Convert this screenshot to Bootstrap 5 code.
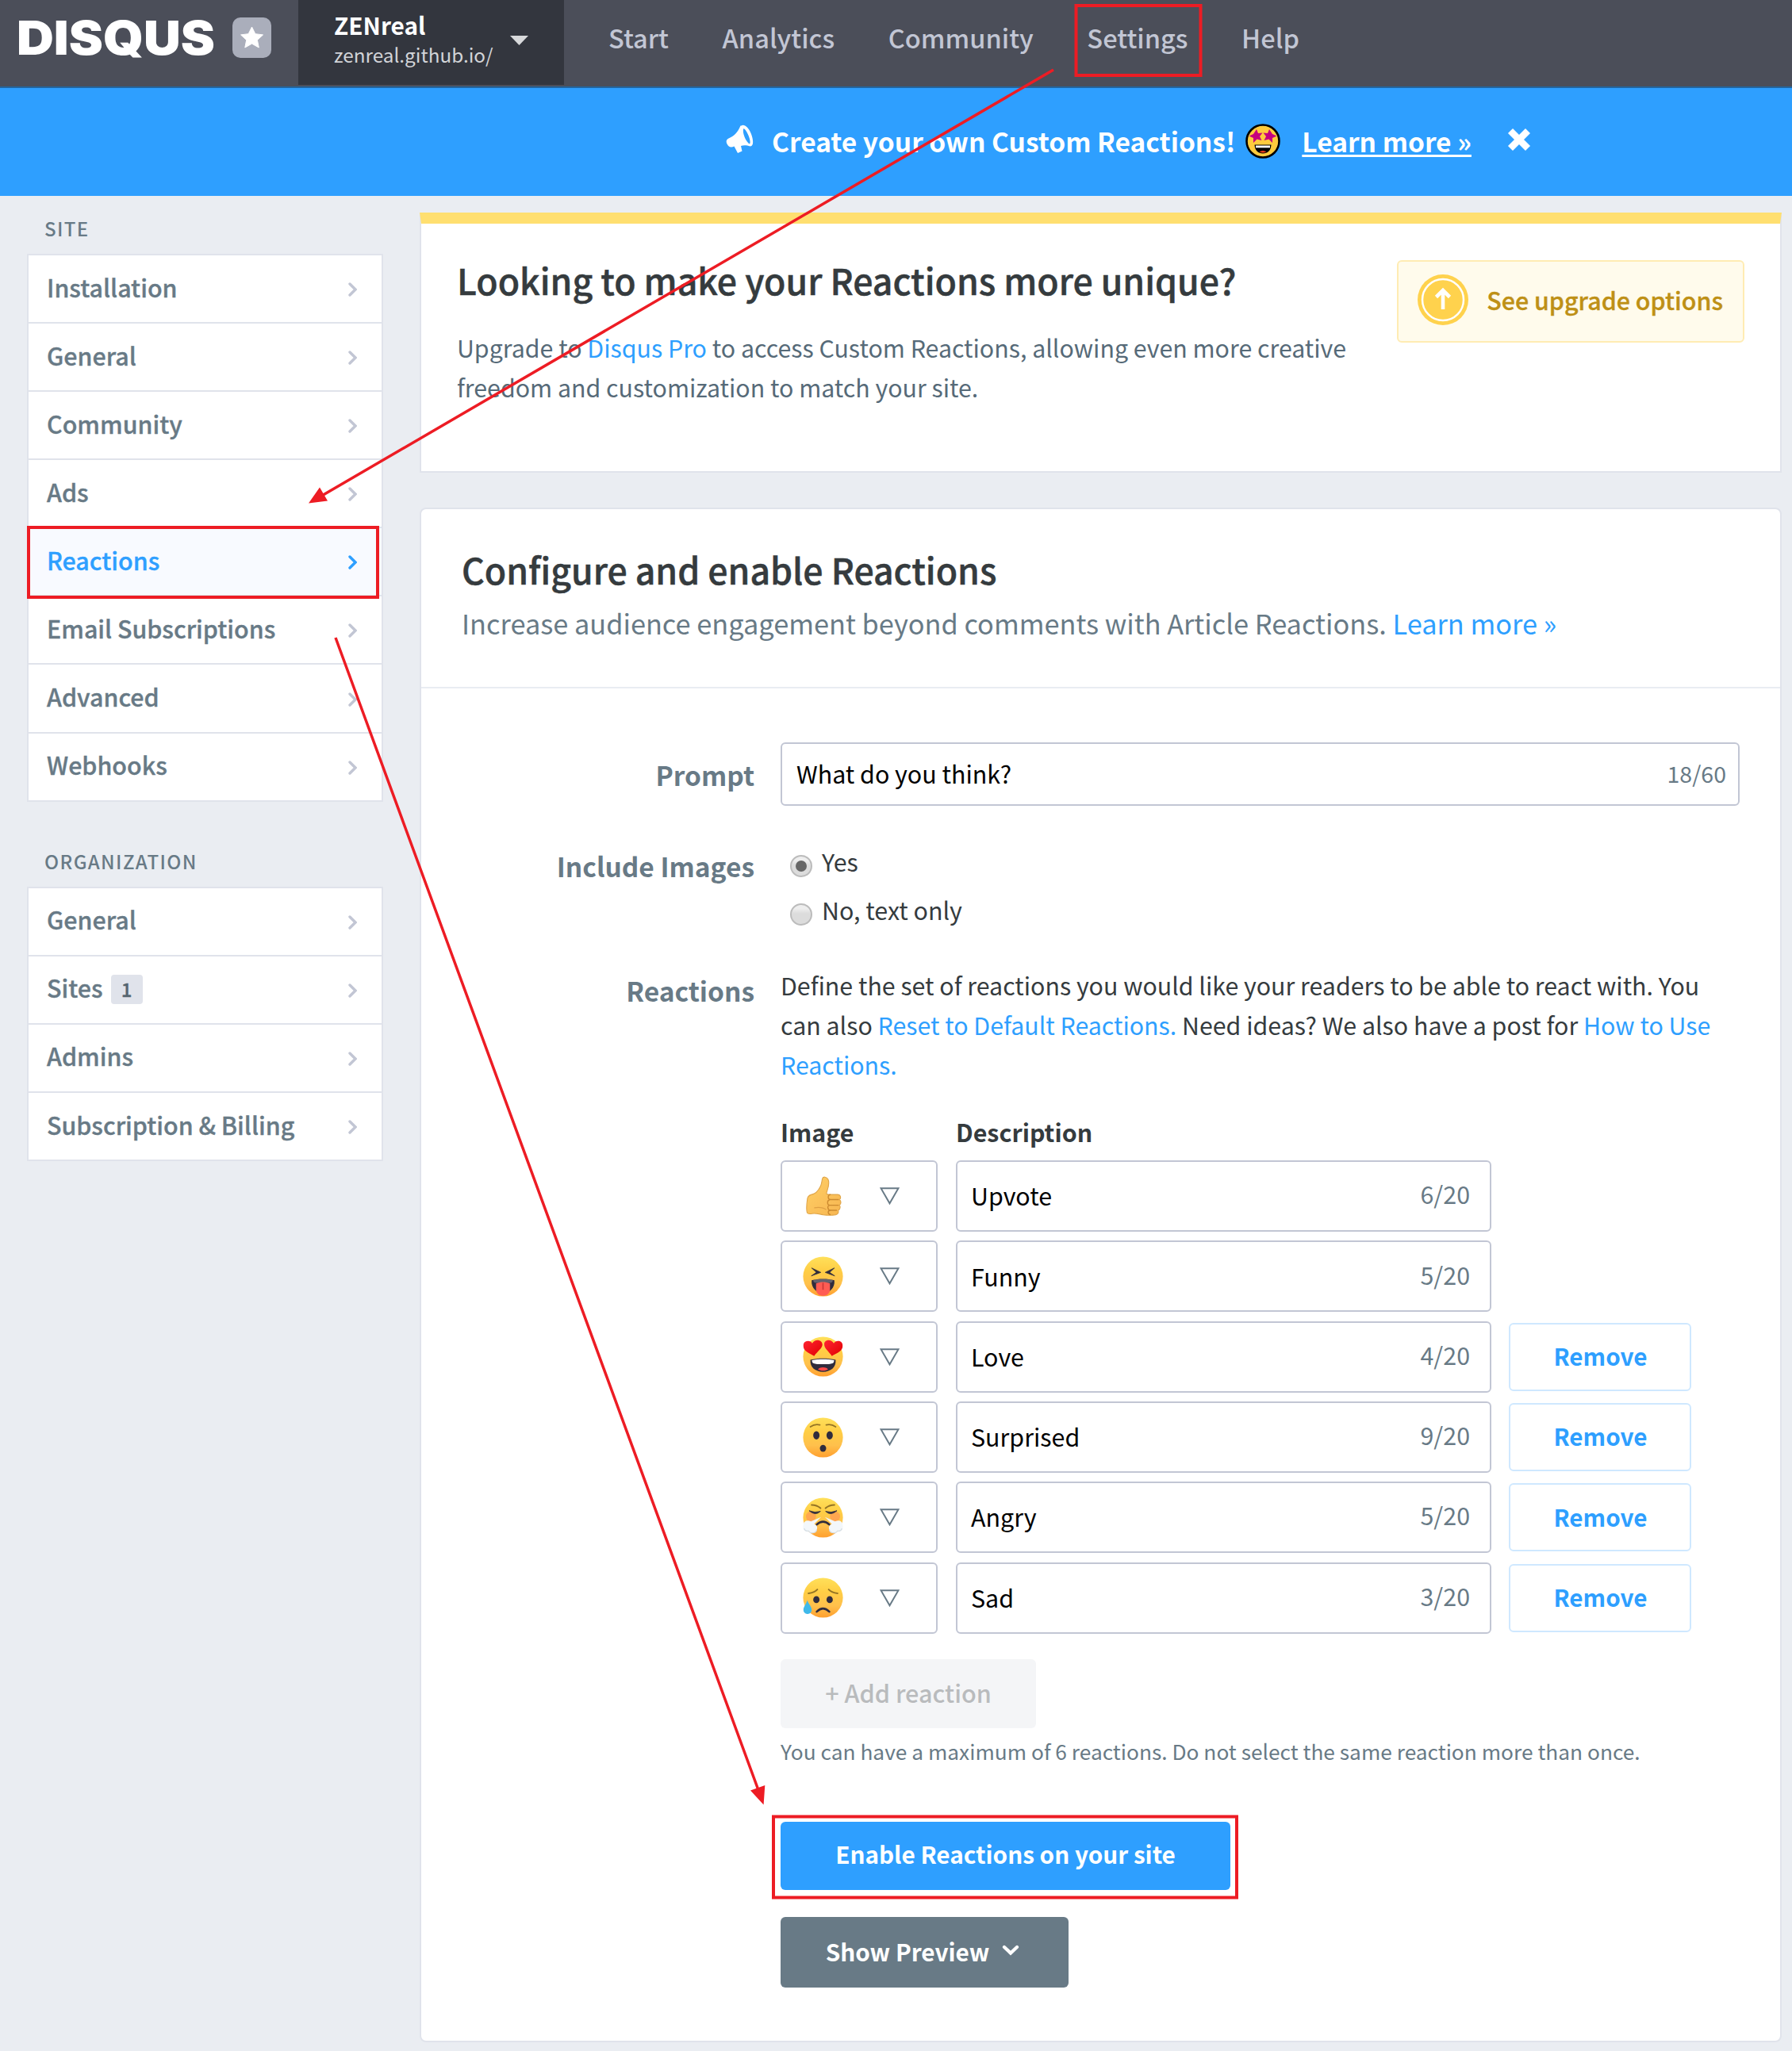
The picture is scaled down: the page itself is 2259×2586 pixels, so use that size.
<!DOCTYPE html>
<html lang="en">
<head>
<meta charset="utf-8">
<title>Disqus – Reactions settings</title>
<meta name="viewport" content="width=device-width, initial-scale=1">
<link href="https://cdn.jsdelivr.net/npm/bootstrap@5.3.0/dist/css/bootstrap.min.css" rel="stylesheet">
<style>
:root{--line:#e0e3eb;--slate:#687a86;--blue:#2e9fff;--field:#c2c6d4}
body{font-family:"Noto Sans CJK SC","Source Sans Pro",sans-serif;background:#eaedf2;color:#353b3e;font-size:30.4px;overflow-x:hidden}
a{color:var(--blue);text-decoration:none}
.topnav{height:109px;background:#4b4e59}
.brand-mark{padding:0 34px 15px 20px;width:376px}
.site-pick{width:335px;height:107px;background:#33363e;padding:13px 45px 0 45px}
.site-name{font-size:29.8px;font-weight:700;line-height:36px;color:#fff}
.site-url{font-size:24.3px;line-height:36px;margin-top:2px;color:#d2d4d8}
.menu-links{gap:67.6px;padding:0 0 14px 56px;font-size:32.6px;font-weight:500}
.menu-links a{color:#c2c6d4}
.promo{height:137.5px;background:var(--blue);border-top:2px solid #24659e;color:#fff;font-size:33.5px;font-weight:700;padding:0 0 2px 915px}
.promo a{color:#fff;text-decoration:underline;text-decoration-thickness:3px;text-underline-offset:3px}
.side{width:529px;padding:21.5px 46px 0 34px}
.side-title{font-size:24px;font-weight:500;letter-spacing:1.4px;line-height:40px;color:var(--slate);padding-left:22px;margin-bottom:12px}
.side .list-group{--bs-list-group-border-color:var(--line);border-radius:0}
.side .list-group-item{height:86.100px;border-width:0 2px 2px;padding:0 31px 0 23px;font-size:30.4px;font-weight:500;color:var(--slate);border-color:var(--line);border-radius:0;-webkit-text-stroke:.35px}
.side .list-group-item+.list-group-item{border-top-width:0}
.side .list-group-item:first-child{height:88px;border-top-width:2px}
.side .list-group-item.on{background:#f8faff;color:var(--blue)}
.side .lbl{padding-bottom:3px}
.side svg{color:var(--field);margin-top:2px}
.side .on svg{color:var(--blue)}
.num{background:var(--line);color:#556570;font-size:24px;font-weight:500;width:40px;height:37px;line-height:35px;border-radius:4px;margin-left:10px;text-align:center}
.main-col{width:1717px;padding-top:21px}
.panel{background:#fff;border:2px solid var(--line)}
.upsell{height:328px;border-top:14px solid #ffdf70;padding:41px 45px 0 45px}
.h-big{font-size:44.6px;font-weight:500;line-height:60px;margin:0;-webkit-text-stroke:.5px}
.upsell p{font-size:30.33px;line-height:50px;margin:30px 0 0;max-width:1160px;color:#566a78}
.up-btn{width:438px;height:104px;margin-top:5px;background:#fffbec;border:2px solid #ffecb3;border-radius:6px;color:#be9016;font-weight:500;font-size:30.4px;padding:0 25px 0 24px;-webkit-text-stroke:.35px}
.config{height:1935px;margin-top:44.5px;border-radius:8px}
.config-head{height:226px;padding:46px 50px 0 51px;border-bottom:2px solid #e9edf2}
.config-head p{font-size:34.33px;line-height:50px;margin:12px 0 0;color:var(--slate)}
.config-body{padding:68px 51px 0 0}
.f-label{width:420px;text-align:right;font-size:33.5px;font-weight:700;line-height:50px;color:var(--slate);flex:none}
.f-field{width:1209px;flex:none}
.f-row{gap:33px}
.box{border:2px solid var(--field);border-radius:6px;background:#fff;color:#000}
.cnt{color:var(--slate)}
.opt{line-height:40px;font-size:30.4px}
.dot{width:28px;height:28px;border-radius:50%;background:linear-gradient(#eee 20%,#dcdcdc 45%);border:2px solid #bcbcbc;margin:12px 12px 0 12px}
.dot.sel::after{content:"";display:block;width:14px;height:14px;border-radius:50%;background:#666;margin:5px}
.help-p{font-size:30.33px;line-height:50.2px;margin:0}
.col-h{font-weight:700;font-size:30.4px;line-height:40px;margin-top:39.5px}
.r-rows{gap:11.3px;margin-top:16.5px}
.r-row{height:90px}
.r-img{width:198px;padding-left:26px;margin-right:23px}
.r-img .tri{margin-left:45.5px}
.r-desc{width:675px;padding:0 25px 0 17px;margin-right:22px}
.r-desc .cnt{padding-bottom:4px;font-size:30.4px}
.btn{border-radius:6px;font-weight:700;font-size:29.7px;padding:0}
.b-rm{width:230px;height:86px;border:2px solid #cfe8ff;color:var(--blue);padding:0 0 1px 1px}
.b-add{width:322px;height:87px;background:#f4f5f7;color:#b9bbbd;font-weight:500;font-size:30.6px;margin-top:32.5px;padding-bottom:1px}
.b-on{width:567px;height:86px;background:var(--blue);color:#fff;margin-top:69px;padding-bottom:3px}
.b-prev{width:363px;height:89px;background:var(--slate);color:#fff;margin-top:34px}
.note{font-size:26.3px;line-height:40px;color:var(--slate);margin-top:9px}
.marks{left:0;top:0;pointer-events:none}
</style>
</head>
<body class="position-relative">
<svg width="0" height="0" class="position-absolute" aria-hidden="true">
 <defs>
  <linearGradient id="face" x1="0" y1="0" x2="0" y2="1"><stop offset="0" stop-color="#ffe05a"/><stop offset=".35" stop-color="#ffce45"/><stop offset=".7" stop-color="#ffc04c"/><stop offset="1" stop-color="#ff9f2e"/></linearGradient>
  <linearGradient id="hand" x1="0" y1="0" x2="1" y2="1"><stop offset="0" stop-color="#ffcf66"/><stop offset="1" stop-color="#f7b651"/></linearGradient>
  <linearGradient id="heart" x1="0" y1="0" x2="1" y2="1"><stop offset="0" stop-color="#ff2433"/><stop offset="1" stop-color="#e00000"/></linearGradient>
  <symbol id="chev" viewBox="0 0 11 18"><path d="M2 2l7 7-7 7" fill="none" stroke="currentColor" stroke-width="3.4" stroke-linecap="round" stroke-linejoin="miter"/></symbol>
  <symbol id="tri" viewBox="0 0 25 22"><path d="M1.5 1.2h22L12.5 20.3z" fill="none" stroke="#687a86" stroke-width="2"/></symbol>
  <symbol id="e-up" viewBox="0 0 64 64">
   <path d="M7 38c0-6 3-8 7-9 7-1 11-7 14-13 2-4 2-8 3-12 1-4 7-3 9 1 3 6 0 14-2 20-1 3 0 4 3 4h14c5 0 6 6 3 8 3 2 3 7 0 9 2 2 1 7-2 8 1 3 0 6-4 7-6 1-13 1-20 0-6-1-9-2-14-2-4 0-9 2-11-1-1-3-1-13 0-20z" fill="url(#hand)" stroke="#e0a548" stroke-width="1.4"/>
   <path d="M57 37H44c-5 0-5-8 0-8M57 46H43c-5 0-5-8 0-9M54 54H44c-5 0-6-8-1-8M44 61c-5-1-5-7 0-7" fill="none" stroke="#cc8a30" stroke-width="1.7"/>
   <path d="M18 50c6-1 14-1 19 3" fill="none" stroke="#dfa044" stroke-width="1.4"/>
  </symbol>
  <symbol id="e-funny" viewBox="0 0 64 64"><circle cx="32" cy="32" r="31.500" fill="url(#face)"/>
   <path d="M14 18.500l14.500 7-15 5.500 8-5.500zM50 18.500l-14.500 7 15 5.500-8-5.500z" fill="#302c3d" stroke="#302c3d" stroke-linejoin="round"/>
   <path d="M14 38c11-3 25-3 36 0 1 13-8 20-18 20s-19-7-18-20z" fill="#302c3d"/><path d="M16.500 38c9-2.500 22-2.500 31 0-.5 4-2 4.500-15.500 4.500S17 42 16.500 38z" fill="#fff" opacity=".25"/>
   <path d="M21 43c8-3 14-3 22 0v9c0 14-22 14-22 0z" fill="#ff5c53"/><path d="M32 42v11" stroke="#c93636" stroke-width="2"/></symbol>
  <symbol id="e-love" viewBox="0 0 64 64"><circle cx="32" cy="32" r="31.500" fill="url(#face)"/>
   <path d="M18 31C10 26 0 23 1 14c0-8 11-9 14-3C19 3 31 5 31 13c0 6-8 11-13 18z" fill="url(#heart)"/>
   <path d="M46 31c8-5 18-8 17-17 0-8-11-9-14-3C45 3 33 5 34 13c0 6 7 11 12 18z" fill="url(#heart)"/>
   <path d="M12 37c13-3 27-3 40 0 1 12-8 19-20 19S11 49 12 37z" fill="#302c3d"/><path d="M14.500 37.500c11-2 24-2 35 0 0 5-2 6.500-17.500 6.500s-17.500-1.500-17.500-6.500z" fill="#fff"/><path d="M24 52c4-4 12-4 16 0-4 3-12 3-16 0z" fill="#ff4a4a"/></symbol>
  <symbol id="e-wow" viewBox="0 0 64 64"><circle cx="32" cy="32" r="31.500" fill="url(#face)"/>
   <path d="M12 15q7-5 15-3M37 12q8-2 15 3" fill="none" stroke="#947425" stroke-width="2.200" stroke-linecap="round"/>
   <ellipse cx="21.500" cy="28.500" rx="5" ry="6.500" fill="#302c3d"/><ellipse cx="42.500" cy="28.500" rx="5" ry="6.500" fill="#302c3d"/><ellipse cx="32" cy="49" rx="5" ry="5.500" fill="#302c3d"/></symbol>
  <symbol id="e-angry" viewBox="0 0 64 64"><circle cx="32" cy="32" r="31.500" fill="url(#face)"/>
   <circle cx="13" cy="30" r="8" fill="#ff7d5c" opacity=".45"/><circle cx="51" cy="30" r="8" fill="#ff7d5c" opacity=".45"/>
   <path d="M14 12q8 0 14 5M50 12q-8 0-14 5" fill="none" stroke="#947425" stroke-width="2.600" stroke-linecap="round"/>
   <path d="M10 21q9 4 18 1-8 8-18-1zM54 21q-9 4-18 1 8 8 18-1z" fill="#302c3d" stroke="#302c3d" stroke-linejoin="round"/>
   <path d="M22 43q10-9 20 0" fill="none" stroke="#302c3d" stroke-width="3.200" stroke-linecap="round"/>
   <path d="M29 31L13 38q-10-4-12 5c-2 7 2 12 8 10 3 5 12 4 13-2 2-4 0-7-4-9zM35 31l16 7q10-4 12 5c2 7-2 12-8 10-3 5-12 4-13-2-2-4 0-7 4-9z" fill="#f3f7fa"/><path d="M2 49c2 6 5 4 7 4 3 5 12 4 13-2M62 49c-2 6-5 4-7 4-3 5-12 4-13-2" fill="none" stroke="#d6dee4" stroke-width="1.500"/></symbol>
  <symbol id="e-sad" viewBox="0 0 64 64"><circle cx="32" cy="32" r="31.500" fill="url(#face)"/>
   <path d="M9 25q9-1 14-6M55 25q-9-1-14-6" fill="none" stroke="#947425" stroke-width="2.600" stroke-linecap="round"/>
   <ellipse cx="21.500" cy="35" rx="5" ry="5.500" fill="#302c3d"/><ellipse cx="42.500" cy="35" rx="5" ry="5.500" fill="#302c3d"/>
   <path d="M22 54q10-10 20 0" fill="none" stroke="#302c3d" stroke-width="3.200" stroke-linecap="round"/>
   <path d="M7 36c3 7 7 10 7 15 0 9-13 9-13 0 0-5 4-8 6-15z" fill="#3fb9ea"/></symbol>
 </defs>
</svg>

<header class="topnav d-flex">
 <div class="brand-mark d-flex align-items-center justify-content-between">
  <svg width="254" height="72" viewBox="0 0 254 72" class="flex-shrink-0"><text x="1" y="58" textLength="250" lengthAdjust="spacingAndGlyphs" font-family="Inter, sans-serif" font-weight="900" font-size="58.500" fill="#fff">DISQUS</text></svg>
  <svg width="49" height="51" viewBox="0 0 49 51" class="flex-shrink-0"><rect width="49" height="51" rx="10" fill="#aaaebb"/><path d="M24.500 12l4.300 8.700 9.700 1.200-7.100 6.600 1.900 9.500-8.800-4.900-8.700 4.900 1.900-9.500-7.100-6.600 9.600-1.200z" fill="#fff" stroke="#fff" stroke-linejoin="round"/></svg>
 </div>
 <div class="site-pick d-flex justify-content-between">
  <div><div class="site-name">ZENreal</div><div class="site-url">zenreal.github.io/</div></div>
  <svg width="23" height="12" viewBox="0 0 23 12" style="margin-top:32px"><path d="M0 0h23L11.500 12z" fill="#d8d9db"/></svg>
 </div>
 <nav class="menu-links d-flex align-items-center"><a href="#">Start</a><a href="#">Analytics</a><a href="#">Community</a><a href="#">Settings</a><a href="#">Help</a></nav>
</header>

<div class="promo d-flex align-items-center">
 <svg width="35" height="37" viewBox="0 0 35 37" style="margin-top:-5px"><path fill="#fff" fill-rule="evenodd" d="M19.500 1.500C23-1 29 4 32 12c3 8 3 15-1 15.500-5-1.500-9-1.500-12-.5l1.500 6.500-5.500 2.500-4.500-8.500c-4 2-7 1-9-3-1.500-3-1-5.500 2-7 7-3 11-7 15-16zM22.500 5c-2.500 4 2.500 17 7.500 19.500 2.500-3-3-17-7.500-19.500z"/></svg>
 <span style="margin-left:23px">Create your own Custom Reactions!</span>
 <svg width="44" height="44" viewBox="0 0 44 44" style="margin-left:13px"><circle cx="22" cy="22" r="20.500" fill="#ffcb3d" stroke="#000" stroke-width="2.600"/><path d="M14 7l2 5 5.500-.5-3.500 4.500 2.500 5-6-1.500-4.500 4.500v-6l-5.500-2.500 5.500-2.500z" fill="#c6007e"/><path d="M30 7l-2 5-5.500-.5 3.500 4.500-2.500 5 6-1.500 4.500 4.500v-6l5.500-2.500-5.500-2.500z" fill="#c6007e"/><path d="M11.500 26.500h21C32 34 28 37.500 22 37.500S12 34 11.500 26.500z" fill="#000"/><path d="M13 27.500h18v2.800H13z" fill="#fff"/><path d="M17.500 35.500q4.500-3 9 0-4.500 2-9 0z" fill="#f33b1b"/></svg>
 <a href="#" style="margin-left:27px">Learn more »</a>
 <svg width="32" height="32" viewBox="0 0 32 32" style="margin:-3px 0 0 44px"><path d="M5 5l22 22M27 5L5 27" stroke="#fff" stroke-width="8.500" stroke-linecap="butt"/></svg>
</div>

<div class="d-flex">
 <aside class="side flex-shrink-0">
  <div class="side-title">SITE</div>
  <div class="list-group" id="siteList"></div>
  <div class="side-title" style="margin-top:55px">ORGANIZATION</div>
  <div class="list-group" id="orgList"></div>
 </aside>

 <main class="main-col flex-shrink-0">
  <section class="panel upsell d-flex justify-content-between align-items-start">
   <div>
    <h2 class="h-big">Looking to make your Reactions more unique?</h2>
    <p>Upgrade to <a href="#">Disqus Pro</a> to access Custom Reactions, allowing even more creative freedom and customization to match your site.</p>
   </div>
   <a href="#" class="up-btn d-flex align-items-center justify-content-between flex-shrink-0">
    <svg width="64" height="64" viewBox="0 0 64 64" style="margin-top:-3px"><circle cx="32" cy="32" r="32" fill="#ffd24d"/><circle cx="32" cy="32" r="26" fill="none" stroke="#fff" stroke-width="2.500"/><path d="M32 44V21M23.500 28.500L32 20l8.500 8.500" fill="none" stroke="#fff" stroke-width="4.600"/></svg>
    <span style="padding-bottom:1px">See upgrade options</span>
   </a>
  </section>

  <section class="panel config">
   <div class="config-head">
    <h2 class="h-big">Configure and enable Reactions</h2>
    <p>Increase audience engagement beyond comments with Article Reactions. <a href="#">Learn more »</a></p>
   </div>
   <div class="config-body">
    <div class="f-row d-flex">
     <div class="f-label" style="padding-top:16px">Prompt</div>
     <div class="f-field box d-flex align-items-center justify-content-between" style="height:80px;padding:0 15px 0 18px"><span>What do you think?</span><span class="cnt" style="font-size:28.500px;padding-bottom:2px">18/60</span></div>
    </div>
    <div class="f-row d-flex" style="margin-top:49.500px">
     <div class="f-label" style="padding-top:1px">Include Images</div>
     <div class="f-field">
      <div class="opt d-flex"><span class="dot sel"></span><span>Yes</span></div>
      <div class="opt d-flex" style="margin-top:21px"><span class="dot"></span><span>No, text only</span></div>
     </div>
    </div>
    <div class="f-row d-flex" style="margin-top:50px">
     <div class="f-label" style="padding-top:7px">Reactions</div>
     <div class="f-field">
      <p class="help-p">Define the set of reactions you would like your readers to be able to react with. You can also <a href="#">Reset to Default Reactions.</a> Need ideas? We also have a post for <a href="#">How to Use Reactions.</a></p>
      <div class="col-h d-flex"><span style="width:221px">Image</span><span>Description</span></div>
      <div class="r-rows d-flex flex-column" id="rows"></div>
      <button class="btn b-add d-block">+ Add reaction</button>
      <div class="note">You can have a maximum of 6 reactions. Do not select the same reaction more than once.</div>
      <button class="btn b-on d-block">Enable Reactions on your site</button>
      <button class="btn b-prev d-flex align-items-center justify-content-center">Show Preview <svg width="22" height="14" viewBox="0 0 22 14" style="margin:-5px 5px 0 16px"><path d="M3 3l8 7.500L19 3" fill="none" stroke="#fff" stroke-width="4.200" stroke-linecap="round"/></svg></button>
     </div>
    </div>
   </div>
  </section>
 </main>
</div>

<!-- walkthrough highlights drawn over the page -->
<svg class="marks position-absolute" width="2259" height="2586" viewBox="0 0 2259 2586" fill="none" stroke="#ed1c24" stroke-width="4">
 <rect x="1356.500" y="7" width="157" height="88"/>
 <rect x="36" y="665" width="440" height="88"/>
 <rect x="975" y="2290.500" width="584" height="102"/>
 <path d="M1328 88L404 626M423 804L956 2257" stroke-width="3.500"/>
 <path d="M389 634.500L403 614.600 413 631.500zM962.600 2275.500L946 2257.600 964.300 2251z" fill="#ed1c24" stroke="none"/>
</svg>

<script>
const chev='<svg width="11" height="18"><use href="#chev"/></svg>';
const item=(t,on,n)=>`<a href="#" class="list-group-item d-flex align-items-center justify-content-between${on?' on':''}"><span class="d-flex align-items-center"><span class="lbl">${t}</span>${n?`<span class="num">${n}</span>`:''}</span>${chev}</a>`;
siteList.innerHTML=['Installation','General','Community','Ads','Reactions','Email Subscriptions','Advanced','Webhooks'].map(t=>item(t,t==='Reactions')).join('');
orgList.innerHTML=item('General')+item('Sites',0,1)+item('Admins')+item('Subscription &amp; Billing');
document.getElementById('rows').innerHTML=[['up','Upvote',6],['funny','Funny',5],['love','Love',4],['wow','Surprised',9],['angry','Angry',5],['sad','Sad',3]].map(([e,t,n],i)=>
`<div class="r-row d-flex align-items-center"><div class="box r-img h-100 d-flex align-items-center"><svg width="51" height="51"><use href="#e-${e}"/></svg><svg class="tri" width="25" height="22"><use href="#tri"/></svg></div><div class="box r-desc h-100 d-flex align-items-center justify-content-between"><span>${t}</span><span class="cnt">${n}/20</span></div>${i>1?'<button class="btn b-rm">Remove</button>':''}</div>`).join('');
</script>
<script src="https://cdn.jsdelivr.net/npm/bootstrap@5.3.0/dist/js/bootstrap.bundle.min.js"></script>
</body>
</html>
